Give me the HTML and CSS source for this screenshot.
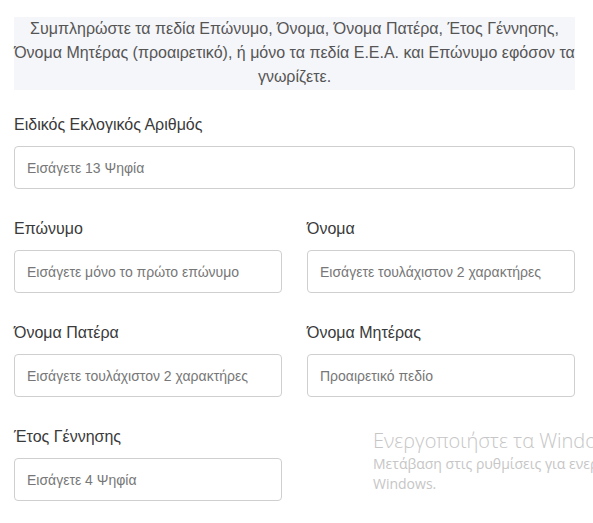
FILE: index.html
```html
<!DOCTYPE html>
<html lang="el">
<head>
<meta charset="utf-8">
<title>Αναζήτηση εκλογέα</title>
<link rel="stylesheet" href="styles.css">
</head>
<body>
<div class="page">
  <div class="info">Συμπληρώστε τα πεδία Επώνυμο, Όνομα, Όνομα Πατέρα, Έτος Γέννησης, Όνομα Μητέρας (προαιρετικό), ή μόνο τα πεδία Ε.Ε.Α. και Επώνυμο εφόσον τα γνωρίζετε.</div>

  <div class="field">
    <label class="label">Ειδικός Εκλογικός Αριθμός</label>
    <input class="input" type="text" placeholder="Εισάγετε 13 Ψηφία">
  </div>

  <div class="row">
    <div class="field">
      <label class="label">Επώνυμο</label>
      <input class="input" type="text" placeholder="Εισάγετε μόνο το πρώτο επώνυμο">
    </div>
    <div class="field">
      <label class="label">Όνομα</label>
      <input class="input" type="text" placeholder="Εισάγετε τουλάχιστον 2 χαρακτήρες">
    </div>
  </div>

  <div class="row">
    <div class="field">
      <label class="label">Όνομα Πατέρα</label>
      <input class="input" type="text" placeholder="Εισάγετε τουλάχιστον 2 χαρακτήρες">
    </div>
    <div class="field">
      <label class="label">Όνομα Μητέρας</label>
      <input class="input" type="text" placeholder="Προαιρετικό πεδίο">
    </div>
  </div>

  <div class="row">
    <div class="field">
      <label class="label">Έτος Γέννησης</label>
      <input class="input" type="text" placeholder="Εισάγετε 4 Ψηφία">
    </div>
  </div>
</div>

<div class="watermark">
  <div class="wm-title">Ενεργοποιήστε τα Windows</div>
  <div class="wm-text">Μετάβαση στις ρυθμίσεις για ενεργοποίηση των<br>Windows.</div>
</div>
</body>
</html>
```

FILE: styles.css
```css
html, body {
  margin: 0;
  padding: 0;
  overflow: hidden;
  background: #ffffff;
}

body {
  font-family: "Liberation Sans", Arial, sans-serif;
  color: #333333;
  width: 593px;
  height: 523px;
  position: relative;
}

.page {
  padding: 17px 18px 0 14px;
}

.info {
  background: #f5f6fa;
  color: #555555;
  font-size: 16px;
  line-height: 24px;
  text-align: center;
  padding: 0 0 1px;
  margin-bottom: 24px;
}

.row {
  display: grid;
  grid-template-columns: 1fr 1fr;
  column-gap: 25px;
}

.field {
  display: flex;
  flex-direction: column;
  margin-bottom: 29px;
}

.label {
  font-size: 16px;
  line-height: 22px;
  color: #3a3a3a;
  margin-bottom: 10px;
}

.input {
  box-sizing: border-box;
  height: 43px;
  width: 100%;
  border: 1px solid #cfcfcf;
  border-radius: 4px;
  padding: 0 12px;
  font-family: "Liberation Sans", Arial, sans-serif;
  font-size: 14px;
  color: #555555;
  background: #ffffff;
  outline: none;
}

.input::placeholder {
  color: #777777;
  opacity: 1;
}

.watermark {
  position: absolute;
  left: 373px;
  top: 428px;
  white-space: nowrap;
  color: #c6c6c6;
  font-family: "Open Sans", "Noto Sans", sans-serif;
}

.wm-title {
  font-size: 20px;
  line-height: 26px;
  font-weight: 300;
}

.wm-text {
  font-size: 14px;
  line-height: 20px;
}
```
